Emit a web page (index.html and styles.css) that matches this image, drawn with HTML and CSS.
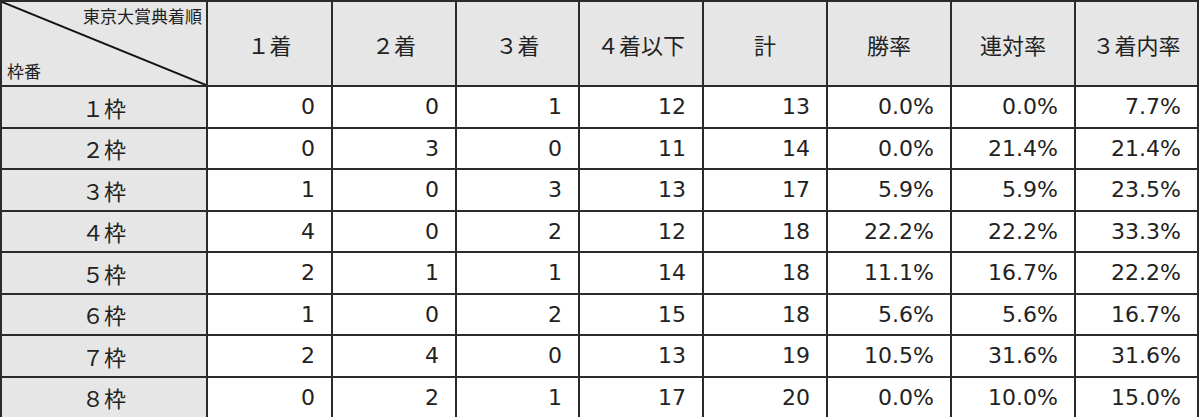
FILE: index.html
```html
<!DOCTYPE html>
<html lang="ja">
<head>
<meta charset="utf-8">
<link rel="stylesheet" href="styles.css">
</head>
<body>
<table class="stats">
  <colgroup>
    <col class="c-first">
    <col class="c-w125">
    <col class="c-w124">
    <col class="c-w123">
    <col class="c-w124">
    <col class="c-w124">
    <col class="c-w124">
    <col class="c-w124">
    <col class="c-w123">
  </colgroup>
  <thead>
    <tr class="head-row">
      <th class="corner">
        <svg class="diag" viewBox="0 0 100 100" preserveAspectRatio="none"><line x1="0" y1="0" x2="100" y2="100" stroke="#111" stroke-width="2" vector-effect="non-scaling-stroke"/></svg>
        <span class="corner-top">東京大賞典着順</span>
        <span class="corner-bottom">枠番</span>
      </th>
      <th>１着</th>
      <th>２着</th>
      <th>３着</th>
      <th>４着以下</th>
      <th>計</th>
      <th>勝率</th>
      <th>連対率</th>
      <th>３着内率</th>
    </tr>
  </thead>
  <tbody>
    <tr><th>１枠</th><td>0</td><td>0</td><td>1</td><td>12</td><td>13</td><td>0.0%</td><td>0.0%</td><td>7.7%</td></tr>
    <tr><th>２枠</th><td>0</td><td>3</td><td>0</td><td>11</td><td>14</td><td>0.0%</td><td>21.4%</td><td>21.4%</td></tr>
    <tr><th>３枠</th><td>1</td><td>0</td><td>3</td><td>13</td><td>17</td><td>5.9%</td><td>5.9%</td><td>23.5%</td></tr>
    <tr><th>４枠</th><td>4</td><td>0</td><td>2</td><td>12</td><td>18</td><td>22.2%</td><td>22.2%</td><td>33.3%</td></tr>
    <tr><th>５枠</th><td>2</td><td>1</td><td>1</td><td>14</td><td>18</td><td>11.1%</td><td>16.7%</td><td>22.2%</td></tr>
    <tr><th>６枠</th><td>1</td><td>0</td><td>2</td><td>15</td><td>18</td><td>5.6%</td><td>5.6%</td><td>16.7%</td></tr>
    <tr><th>７枠</th><td>2</td><td>4</td><td>0</td><td>13</td><td>19</td><td>10.5%</td><td>31.6%</td><td>31.6%</td></tr>
    <tr><th>８枠</th><td>0</td><td>2</td><td>1</td><td>17</td><td>20</td><td>0.0%</td><td>10.0%</td><td>15.0%</td></tr>
  </tbody>
</table>
</body>
</html>
```
FILE: styles.css
```css
html, body {
  margin: 0;
  padding: 0;
  background: #fff;
}

.stats {
  border-collapse: collapse;
  table-layout: fixed;
  width: 1199px;
  font-family: "DejaVu Sans", "Noto Sans CJK JP", sans-serif;
  font-size: 22px;
  color: #222;
}

.c-first { width: 206px; }
.c-w125 { width: 125px; }
.c-w124 { width: 124px; }
.c-w123 { width: 123px; }

.stats th,
.stats td {
  border: 2px solid #2b2b2b;
  padding: 0 16px 0 0;
  font-weight: normal;
  white-space: nowrap;
}

.stats thead th {
  background: #e6e6e6;
  text-align: center;
  padding: 0;
}

.head-row {
  height: 85px;
}

.stats tbody tr {
  height: 41.5px;
}

.stats tbody th {
  background: #e6e6e6;
  text-align: center;
  padding: 0;
}

.stats td {
  text-align: right;
  background: #fff;
}

.corner {
  position: relative;
  font-family: "Noto Sans CJK JP", sans-serif;
  font-size: 17px;
  line-height: 1;
}

.diag {
  position: absolute;
  left: 0;
  top: 0;
  width: 100%;
  height: 100%;
}

.corner-top {
  position: absolute;
  top: 5px;
  right: 4px;
}

.corner-bottom {
  position: absolute;
  left: 5px;
  bottom: 6px;
}
```
